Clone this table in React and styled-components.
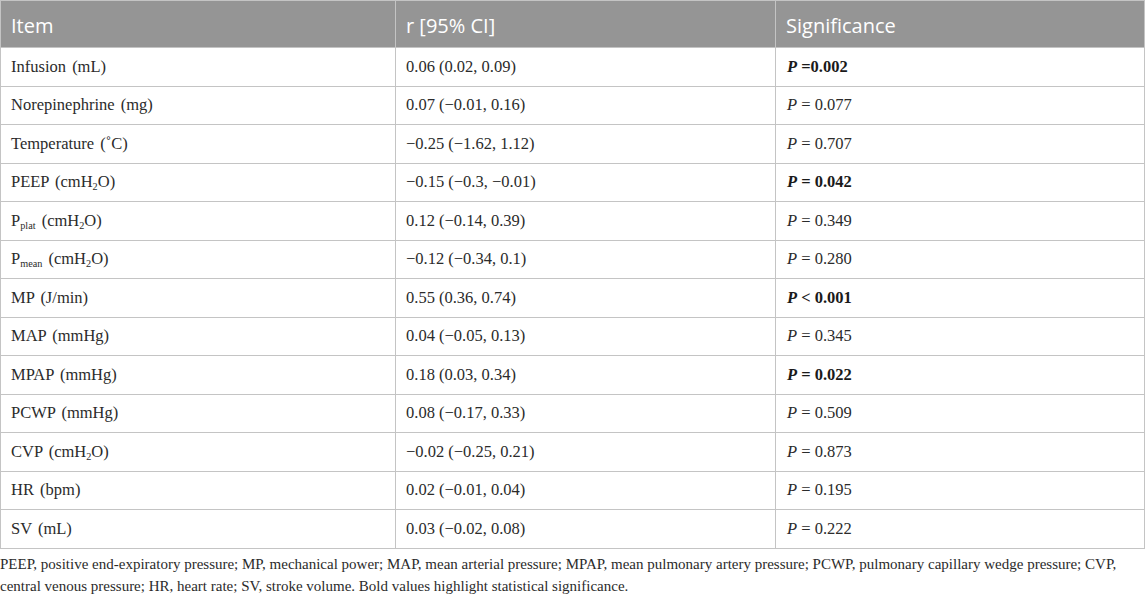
import React from "react";
import styled, { createGlobalStyle } from "styled-components";

const GlobalStyle = createGlobalStyle`
  body {
    margin: 0;
    background: #ffffff;
  }
`;

const Wrapper = styled.div`
  width: 1145px;
`;

const Table = styled.table`
  width: 1145px;
  border-collapse: collapse;
  table-layout: fixed;
  border: 1px solid #c4c4c4;
`;

const HeadCell = styled.th`
  background: #959595;
  color: #ffffff;
  font-family: "Open Sans", "Liberation Sans", sans-serif;
  font-size: 20px;
  font-weight: 400;
  text-align: left;
  height: 47px;
  padding: 2px 10px 0;
  box-sizing: border-box;
  border-left: 1px solid #c4c4c4;
  border-top: 1px solid #c4c4c4;
`;

const Cell = styled.td`
  font-family: "Liberation Serif", "Times New Roman", serif;
  font-size: 16.5px;
  color: #2b2b2b;
  height: 38.5px;
  padding: 0 ${(p) => (p.$wide ? "11px" : "10px")};
  box-sizing: border-box;
  border: 1px solid #c4c4c4;
  white-space: nowrap;
`;

const Gap = styled.span`
  margin-left: 2px;
`;

const Strong = styled.b`
  font-weight: 700;
  color: #1a1a1a;
`;

const Pee = styled.i`
  font-style: italic;
  font-weight: ${(p) => (p.$bold ? 700 : 400)};
`;

const Sub = styled.sub`
  font-size: 0.62em;
  vertical-align: -0.3em;
  line-height: 0;
`;

const Footnote = styled.p`
  margin: 4px 0 0;
  font-family: "Liberation Serif", "Times New Roman", serif;
  font-size: 15px;
  line-height: 22px;
  color: #2b2b2b;
`;

const H2O = () => (
  <>
    cmH<Sub>2</Sub>O
  </>
);

const rows = [
  { item: "Infusion", unit: "(mL)", r: "0.06 (0.02, 0.09)", p: "=0.002", bold: true, tight: true },
  { item: "Norepinephrine", unit: "(mg)", r: "0.07 (−0.01, 0.16)", p: "0.077" },
  { item: "Temperature", unit: "(˚C)", r: "−0.25 (−1.62, 1.12)", p: "0.707" },
  { item: "PEEP", unit: <>(<H2O />)</>, r: "−0.15 (−0.3, −0.01)", p: "0.042", bold: true },
  { item: <>P<Sub>plat</Sub></>, unit: <>(<H2O />)</>, r: "0.12 (−0.14, 0.39)", p: "0.349" },
  { item: <>P<Sub>mean</Sub></>, unit: <>(<H2O />)</>, r: "−0.12 (−0.34, 0.1)", p: "0.280" },
  { item: "MP", unit: "(J/min)", r: "0.55 (0.36, 0.74)", p: "0.001", bold: true, op: "<" },
  { item: "MAP", unit: "(mmHg)", r: "0.04 (−0.05, 0.13)", p: "0.345" },
  { item: "MPAP", unit: "(mmHg)", r: "0.18 (0.03, 0.34)", p: "0.022", bold: true },
  { item: "PCWP", unit: "(mmHg)", r: "0.08 (−0.17, 0.33)", p: "0.509" },
  { item: "CVP", unit: <>(<H2O />)</>, r: "−0.02 (−0.25, 0.21)", p: "0.873" },
  { item: "HR", unit: "(bpm)", r: "0.02 (−0.01, 0.04)", p: "0.195" },
  { item: "SV", unit: "(mL)", r: "0.03 (−0.02, 0.08)", p: "0.222" },
];

function PValue({ row }) {
  const op = row.op || "=";
  if (row.tight) {
    return (
      <Strong>
        <Pee $bold>P</Pee> {row.p}
      </Strong>
    );
  }
  const text = `${op} ${row.p}`;
  return row.bold ? (
    <Strong>
      <Pee $bold>P</Pee> {text}
    </Strong>
  ) : (
    <>
      <Pee>P</Pee> {text}
    </>
  );
}

export default function App() {
  return (
    <Wrapper>
      <GlobalStyle />
      <Table>
        <colgroup>
          <col style={{ width: 395 }} />
          <col style={{ width: 380 }} />
          <col />
        </colgroup>
        <thead>
          <tr>
            <HeadCell>Item</HeadCell>
            <HeadCell>r [95% CI]</HeadCell>
            <HeadCell>Significance</HeadCell>
          </tr>
        </thead>
        <tbody>
          {rows.map((row, i) => (
            <tr key={i}>
              <Cell>
                {row.item} <Gap>{row.unit}</Gap>
              </Cell>
              <Cell>{row.r}</Cell>
              <Cell $wide>
                <PValue row={row} />
              </Cell>
            </tr>
          ))}
        </tbody>
      </Table>
      <Footnote>
        PEEP, positive end-expiratory pressure; MP, mechanical power; MAP, mean arterial pressure; MPAP, mean
        pulmonary artery pressure; PCWP, pulmonary capillary wedge pressure; CVP, central venous pressure; HR, heart
        rate; SV, stroke volume. Bold values highlight statistical significance.
      </Footnote>
    </Wrapper>
  );
}
